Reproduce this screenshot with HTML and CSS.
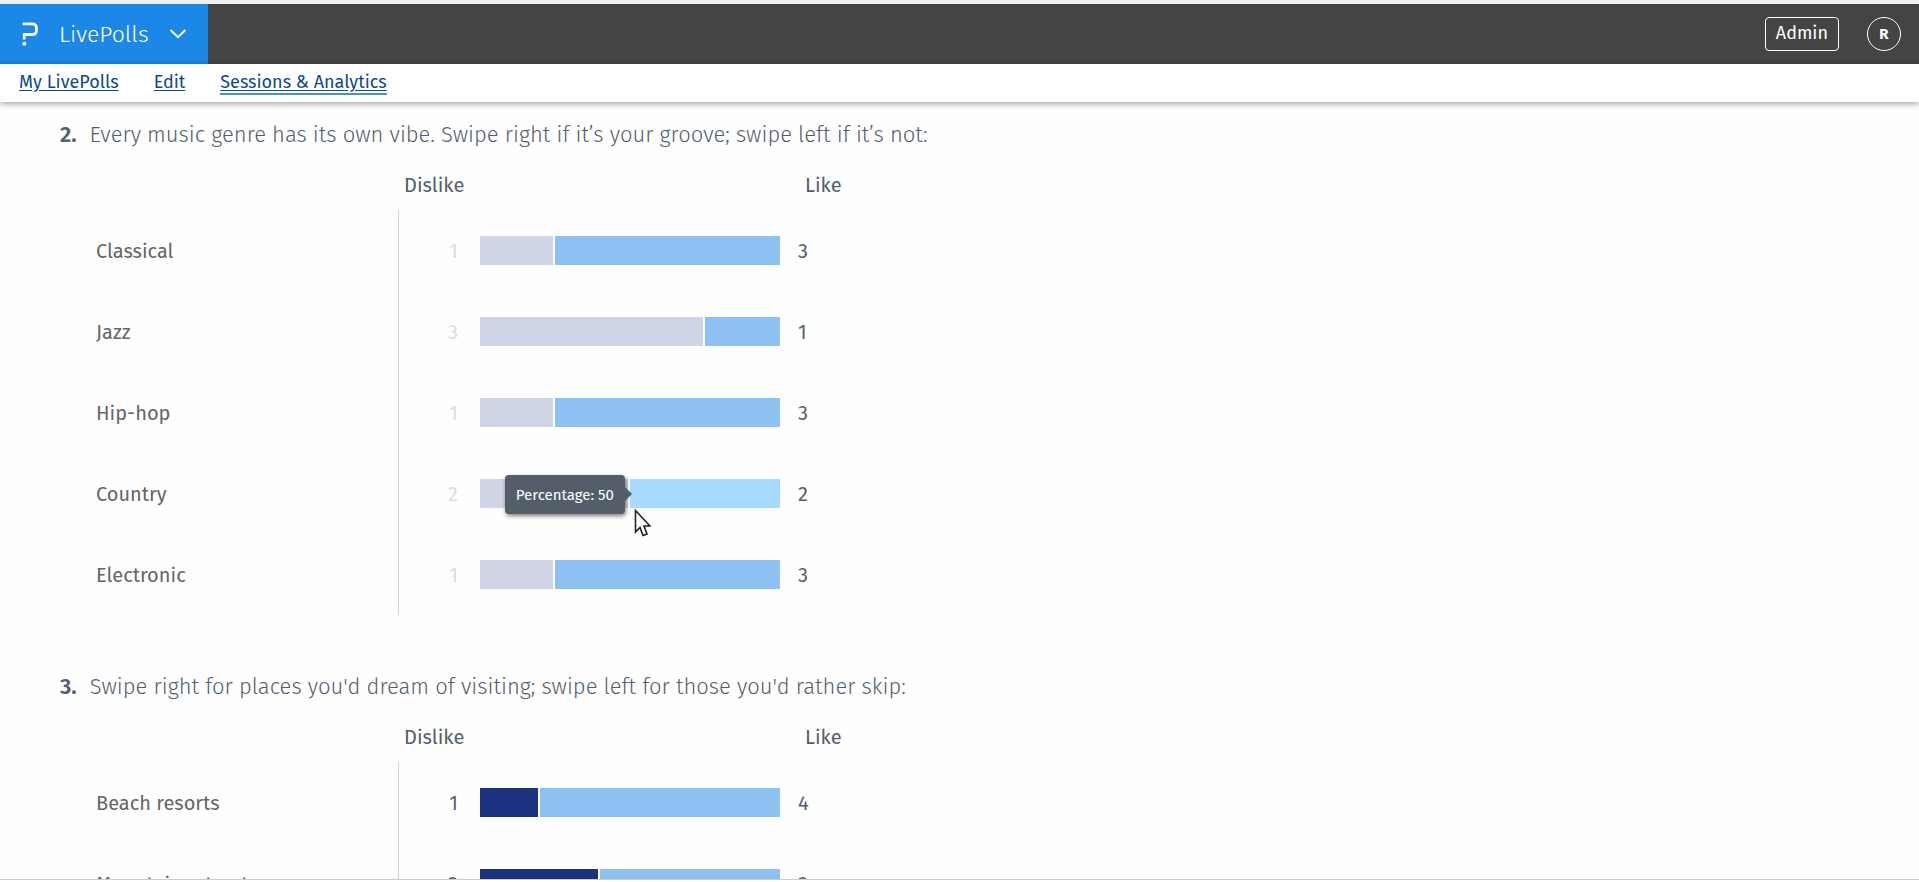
FILE: index.html
```html
<!DOCTYPE html>
<html lang="en">
<head>
    <meta charset="UTF-8">
    <meta name="viewport" content="width=device-width, initial-scale=1.0">
    <title>LivePolls - Sessions &amp; Analytics</title>
    <link rel="stylesheet" href="styles.css">
</head>
<body>

    <header class="topbar">
        <button type="button" class="product">
            <svg class="logo" width="18" height="26" viewBox="0 0 18 26" fill="none" aria-hidden="true">
                <path d="M1.7 2.9H11Q15.4 2.9 15.4 7V9.4Q15.4 13.5 11 13.5H3.2V18.5" stroke="#fff" stroke-width="2.8"/>
                <circle cx="3.3" cy="22.8" r="2" fill="#fff"/>
            </svg>
            <span class="product-name">LivePolls</span>
            <svg class="chevron" width="18" height="10" viewBox="0 0 18 10" fill="none" aria-hidden="true">
                <path d="M1.5 1L9 8.2L16.5 1" stroke="#fff" stroke-width="2"/>
            </svg>
        </button>
        <div class="account">
            <button type="button" class="admin">Admin</button>
            <button type="button" class="avatar" aria-label="Account">R</button>
        </div>
    </header>

    <nav class="subnav">
        <a href="#">My LivePolls</a>
        <a href="#">Edit</a>
        <a href="#" class="active">Sessions &amp; Analytics</a>
    </nav>

    <main class="report">
        <section class="question">
            <h2><span class="number">2.</span>Every music genre has its own vibe. Swipe right if it’s your groove; swipe left if it’s not:</h2>
            <table class="results dimmed">
                <thead>
                    <tr>
                        <td class="label"></td>
                        <th colspan="2" class="dislike-title">Dislike</th>
                        <th class="like-title">Like</th>
                    </tr>
                </thead>
                <tbody>
                    <tr>
                        <th class="label">Classical</th>
                        <td class="dislike-count">1</td>
                        <td class="chart"><div class="bar"><span class="dislike" style="width: 25%"></span><span class="like"></span></div></td>
                        <td class="like-count">3</td>
                    </tr>
                    <tr>
                        <th class="label">Jazz</th>
                        <td class="dislike-count">3</td>
                        <td class="chart"><div class="bar"><span class="dislike" style="width: 75%"></span><span class="like"></span></div></td>
                        <td class="like-count">1</td>
                    </tr>
                    <tr>
                        <th class="label">Hip-hop</th>
                        <td class="dislike-count">1</td>
                        <td class="chart"><div class="bar"><span class="dislike" style="width: 25%"></span><span class="like"></span></div></td>
                        <td class="like-count">3</td>
                    </tr>
                    <tr>
                        <th class="label">Country</th>
                        <td class="dislike-count">2</td>
                        <td class="chart">
                            <div class="bar">
                                <span class="dislike" style="width: 50%"></span>
                                <span class="like hovered">
                                    <span class="tooltip" role="tooltip">Percentage: 50</span>
                                    <svg class="cursor" width="17" height="28" viewBox="0 0 17 28" aria-hidden="true">
                                        <path d="M1.5 1.5V23L6 18.5L9 26.5L13 25L10 17H16Z" fill="#fff" stroke="#222" stroke-width="1.6"/>
                                    </svg>
                                </span>
                            </div>
                        </td>
                        <td class="like-count">2</td>
                    </tr>
                    <tr>
                        <th class="label">Electronic</th>
                        <td class="dislike-count">1</td>
                        <td class="chart"><div class="bar"><span class="dislike" style="width: 25%"></span><span class="like"></span></div></td>
                        <td class="like-count">3</td>
                    </tr>
                </tbody>
            </table>
        </section>

        <section class="question">
            <h2><span class="number">3.</span>Swipe right for places you'd dream of visiting; swipe left for those you'd rather skip:</h2>
            <table class="results">
                <thead>
                    <tr>
                        <td class="label"></td>
                        <th colspan="2" class="dislike-title">Dislike</th>
                        <th class="like-title">Like</th>
                    </tr>
                </thead>
                <tbody>
                    <tr>
                        <th class="label">Beach resorts</th>
                        <td class="dislike-count">1</td>
                        <td class="chart"><div class="bar"><span class="dislike" style="width: 20%"></span><span class="like"></span></div></td>
                        <td class="like-count">4</td>
                    </tr>
                    <tr>
                        <th class="label">Mountain retreats</th>
                        <td class="dislike-count">2</td>
                        <td class="chart"><div class="bar"><span class="dislike" style="width: 40%"></span><span class="like"></span></div></td>
                        <td class="like-count">3</td>
                    </tr>
                </tbody>
            </table>
        </section>
    </main>

    <footer class="footer"></footer>

</body>
</html>
```
FILE: styles.css
```css
* {
    box-sizing: border-box;
}

body {
    margin: 0;
    height: 100vh;
    display: flex;
    flex-direction: column;
    background: #fefefe;
    color: #545e6b;
    font-family: "Fira Sans", "Noto Sans", "Open Sans", sans-serif;
    font-size: 20px;
}

button {
    font-family: inherit;
    color: #fff;
    cursor: pointer;
}

/* Top bar */
.topbar {
    display: flex;
    justify-content: space-between;
    height: 64px;
    flex-shrink: 0;
    background: #444;
    border-top: 4px solid #f0f0f2;
}

.product {
    display: flex;
    align-items: center;
    padding: 0 21px;
    border: 0;
    background: #1b87e6;
}

.product-name {
    margin: 0 20px;
    font-size: 23px;
    font-weight: 300;
}

.account {
    display: flex;
    align-items: center;
    gap: 28px;
    padding: 0 18px;
}

.admin {
    height: 34px;
    padding: 0 10px 2px;
    border: 1px solid #fff;
    border-radius: 4px;
    background: none;
    font-size: 18px;
}

.avatar {
    width: 34px;
    height: 34px;
    padding: 0;
    border: 1px solid #fff;
    border-radius: 50%;
    background: none;
    font-size: 15px;
    font-weight: 700;
}

/* Secondary navigation */
.subnav {
    display: flex;
    align-items: flex-start;
    gap: 35px;
    height: 38px;
    flex-shrink: 0;
    padding: 7px 19px;
    background: #fff;
    box-shadow: 0 2px 6px rgba(0, 0, 0, 0.35);
    z-index: 1;
}

.subnav a {
    color: #0b4a8f;
    font-size: 18px;
    line-height: 22px;
    text-underline-offset: 2px;
    border-bottom: 2px solid transparent;
}

.subnav a.active {
    border-bottom-color: #4a94b4;
}

/* Report */
.report {
    flex: 1;
    min-height: 0;
    overflow: hidden;
    padding: 17px 60px 0;
}

.question {
    margin-bottom: 56px;
}

.question h2 {
    margin: 0;
    font-size: 22px;
    line-height: 32px;
    font-weight: 300;
}

.number {
    margin-right: 13px;
    font-weight: 600;
}

.results {
    border-collapse: collapse;
    line-height: 28px;
}

.results th {
    font-weight: 400;
    text-align: left;
}

.results th,
.results td {
    padding: 0;
}

.results thead tr {
    height: 59px;
}

.results tbody tr {
    height: 81px;
}

.results .label {
    width: 338px;
    padding-left: 36px;
    color: #666;
}

.results .dislike-title {
    padding: 8px 0 0 6px;
}

.results .like-title {
    padding: 8px 0 0 25px;
}

.results .dislike-count {
    width: 82px;
    padding-right: 22px;
    border-left: 1px solid #ccd3e4;
    text-align: right;
}

.dimmed .dislike-count {
    color: #ddd;
}

.results .like-count {
    padding-left: 18px;
}

/* Stacked bars */
.bar {
    display: flex;
    width: 300px;
    height: 29px;
}

.dislike {
    background: #1c327f;
    border-right: 2px solid #fefefe;
}

.dimmed .dislike {
    background: #d0d5e5;
}

.like {
    position: relative;
    flex: 1;
    background: #8dc1f1;
}

.like.hovered {
    background: #a6dbff;
}

.tooltip {
    position: absolute;
    top: -4px;
    right: 100%;
    margin-right: 5px;
    padding: 1px 11px 0;
    border-radius: 4px;
    background: #545e6b;
    box-shadow: 1px 2px 4px rgba(0, 0, 0, 0.5);
    color: #fff;
    font-size: 15px;
    line-height: 38px;
    white-space: nowrap;
}

.tooltip::after {
    content: "";
    position: absolute;
    top: 12px;
    left: 100%;
    border: 7px solid transparent;
    border-right: 0;
    border-left-color: #545e6b;
}

.cursor {
    position: absolute;
    top: 30px;
    left: 4px;
}

.footer {
    height: 3px;
    flex-shrink: 0;
    border-top: 1px solid #ccc;
    background: #fff;
}
```
